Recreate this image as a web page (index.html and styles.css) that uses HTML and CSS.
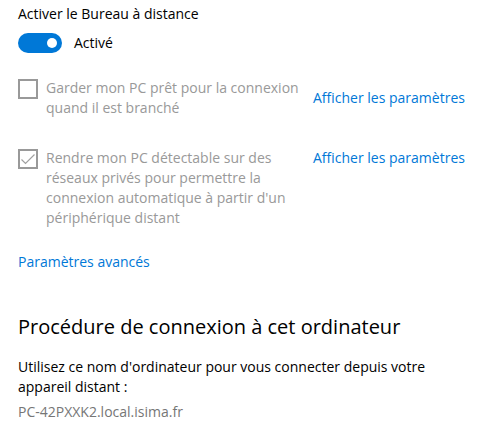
FILE: index.html
```html
<!DOCTYPE html>
<html lang="fr">
<head>
<meta charset="utf-8">
<link rel="stylesheet" href="styles.css">
</head>
<body>
<div class="page">
  <div class="label">Activer le Bureau à distance</div>
  <div class="toggle-row">
    <span class="toggle"><span class="knob"></span></span>
    <span class="toggle-text">Activé</span>
  </div>

  <div class="option first">
    <span class="checkbox"></span>
    <div class="option-text">Garder mon PC prêt pour la connexion<br>quand il est branché</div>
    <a class="link option-link">Afficher les paramètres</a>
  </div>

  <div class="option second">
    <span class="checkbox">
      <svg width="16" height="16" viewBox="0 0 16 16"><path d="M1.5 8.5 L5.5 12.5 L14.5 3.5" fill="none" stroke="#a0a0a0" stroke-width="1.2"/></svg>
    </span>
    <div class="option-text">Rendre mon PC détectable sur des<br>réseaux privés pour permettre la<br>connexion automatique à partir d'un<br>périphérique distant</div>
    <a class="link option-link">Afficher les paramètres</a>
  </div>

  <a class="link advanced">Paramètres avancés</a>

  <h2 class="heading">Procédure de connexion à cet ordinateur</h2>
  <p class="desc">Utilisez ce nom d'ordinateur pour vous connecter depuis votre<br>appareil distant :</p>
  <p class="pcname">PC-42PXXK2.local.isima.fr</p>
</div>
</body>
</html>
```
FILE: styles.css
```css
html, body {
  margin: 0;
  padding: 0;
  background: #ffffff;
}
body {
  font-family: "Open Sans", "Noto Sans", sans-serif;
  font-size: 14px;
  line-height: 20px;
  color: #000000;
}
.page {
  padding: 4px 0 0 18px;
  width: 459px;
}
.label {
  height: 20px;
}
.toggle-row {
  display: flex;
  align-items: center;
  margin-top: 9px;
  height: 20px;
}
.toggle {
  position: relative;
  width: 44px;
  height: 20px;
  border-radius: 10px;
  background: #0078d7;
  box-sizing: border-box;
}
.knob {
  position: absolute;
  right: 5px;
  top: 5px;
  width: 10px;
  height: 10px;
  border-radius: 50%;
  background: #ffffff;
}
.toggle-text {
  margin-left: 12px;
}
.option {
  display: flex;
  align-items: flex-start;
}
.option.first {
  margin-top: 26px;
}
.option.second {
  margin-top: 31px;
}
.checkbox {
  width: 20px;
  height: 20px;
  box-sizing: border-box;
  border: 2px solid #999999;
  flex: none;
  display: flex;
  align-items: center;
  justify-content: center;
}
.option-text {
  margin-left: 8px;
  margin-top: -1px;
  color: #999999;
  width: 259px;
}
.option-link {
  margin-left: 8px;
  margin-top: -1px;
}
.first .option-link {
  margin-top: 9px;
}
.link {
  color: #0078d7;
  text-decoration: none;
  white-space: nowrap;
}
.advanced {
  display: block;
  margin-top: 24px;
}
.heading {
  margin: 41px 0 0 0;
  font-size: 20px;
  font-weight: normal;
  line-height: 28px;
}
.desc {
  margin: 16px 0 0 0;
}
.pcname {
  margin: 5px 0 0 0;
  color: #767676;
}
```
